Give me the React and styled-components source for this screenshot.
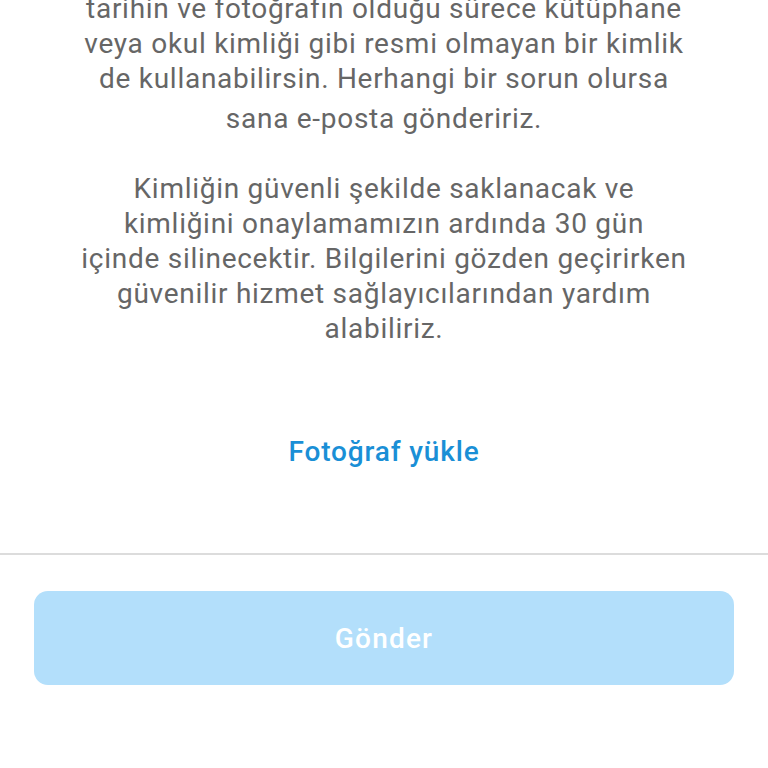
import React from "react";
import styled, { createGlobalStyle } from "styled-components";

const GlobalStyle = createGlobalStyle`
  html, body {
    margin: 0;
    padding: 0;
    background: #ffffff;
    overflow: hidden;
  }
  body {
    font-family: Roboto, "Noto Sans", "Liberation Sans", sans-serif;
  }
`;

const Page = styled.div`
  width: 768px;
  height: 768px;
  display: flex;
  flex-direction: column;
  overflow: hidden;
`;

const Body = styled.div`
  display: flex;
  flex-direction: column;
  align-items: center;
  margin-top: -9px;
`;

const Paragraph = styled.p`
  margin: 0 0 ${(p) => p.$gap || 0}px;
  text-align: center;
  color: #666666;
  font-size: 28px;
  line-height: 35px;
  letter-spacing: 0.72px;
`;

const Line = styled.span`
  display: block;
  white-space: nowrap;
  padding-top: ${(p) => p.$extra || 0}px;
`;

const UploadLink = styled.button`
  margin-top: 88px;
  border: none;
  background: none;
  padding: 0;
  font-family: inherit;
  font-size: 28px;
  font-weight: 500;
  line-height: 36px;
  letter-spacing: 0.85px;
  color: #1a8fd6;
  cursor: pointer;
`;

const Divider = styled.div`
  margin-top: 83px;
  height: 2px;
  background: #dcdcdc;
`;

const Footer = styled.div`
  padding: 36px 34px 0 34px;
`;

const SubmitButton = styled.button`
  width: 100%;
  height: 94px;
  border: none;
  border-radius: 14px;
  background: #b3dffb;
  color: #ffffff;
  font-family: inherit;
  font-size: 28px;
  font-weight: 500;
  letter-spacing: 1.2px;
`;

const first = [
  "tarihin ve fotoğrafın olduğu sürece kütüphane",
  "veya okul kimliği gibi resmi olmayan bir kimlik",
  "de kullanabilirsin. Herhangi bir sorun olursa",
];

const second = [
  "Kimliğin güvenli şekilde saklanacak ve",
  "kimliğini onaylamamızın ardında 30 gün",
  "içinde silinecektir. Bilgilerini gözden geçirirken",
  "güvenilir hizmet sağlayıcılarından yardım",
  "alabiliriz.",
];

export default function App() {
  return (
    <Page>
      <GlobalStyle />
      <Body>
        <Paragraph $gap={35}>
          {first.map((l) => (
            <Line key={l}>{l}</Line>
          ))}
          <Line $extra={5}>sana e-posta göndeririz.</Line>
        </Paragraph>
        <Paragraph>
          {second.map((l) => (
            <Line key={l}>{l}</Line>
          ))}
        </Paragraph>
        <UploadLink>Fotoğraf yükle</UploadLink>
      </Body>
      <Divider />
      <Footer>
        <SubmitButton disabled>Gönder</SubmitButton>
      </Footer>
    </Page>
  );
}
